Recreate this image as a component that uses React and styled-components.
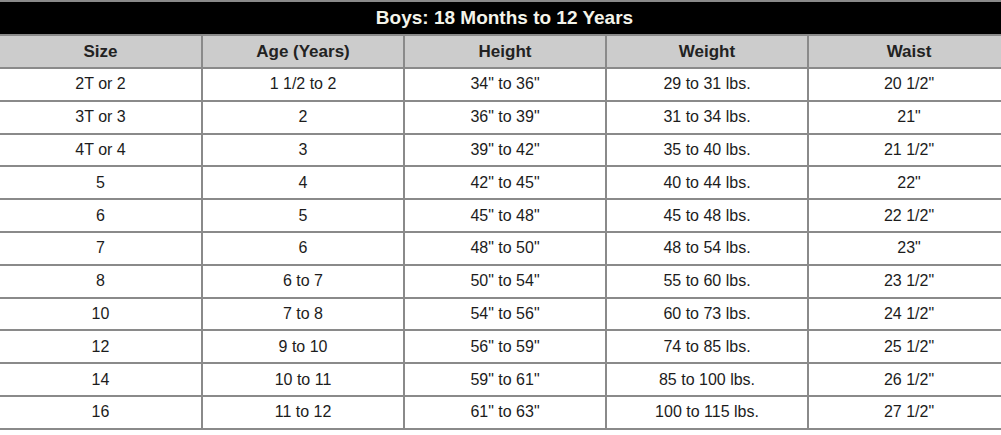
import React from 'react';
import styled, { createGlobalStyle } from 'styled-components';

const GlobalStyle = createGlobalStyle`
  html, body {
    margin: 0;
    padding: 0;
    background: #ffffff;
    overflow: hidden;
  }
  body {
    font-family: "Liberation Sans", Arial, sans-serif;
  }
`;

const Chart = styled.div`
  display: grid;
  grid-template-columns: 201px repeat(4, 200px);
  grid-template-rows: 32px 31px;
  grid-auto-rows: 30.8px;
  gap: 2px;
  padding: 2px 0;
  background: #8a8a8a;
  width: 1009px;
`;

const Title = styled.div`
  grid-column: 1 / -1;
  background: #000000;
  color: #f4f4ea;
  font-size: 19px;
  font-weight: bold;
  display: flex;
  align-items: center;
  justify-content: center;
`;

const HeadCell = styled.div`
  background: #cccccc;
  color: #222222;
  font-size: 17px;
  font-weight: bold;
  display: flex;
  align-items: center;
  justify-content: center;
`;

const Cell = styled.div`
  background: #ffffff;
  color: #1c1c1c;
  font-size: 16px;
  display: flex;
  align-items: center;
  justify-content: center;
`;

const columns = ['Size', 'Age (Years)', 'Height', 'Weight', 'Waist'];

const rows = [
  ['2T or 2', '1 1/2 to 2', '34" to 36"', '29 to 31 lbs.', '20 1/2"'],
  ['3T or 3', '2', '36" to 39"', '31 to 34 lbs.', '21"'],
  ['4T or 4', '3', '39" to 42"', '35 to 40 lbs.', '21 1/2"'],
  ['5', '4', '42" to 45"', '40 to 44 lbs.', '22"'],
  ['6', '5', '45" to 48"', '45 to 48 lbs.', '22 1/2"'],
  ['7', '6', '48" to 50"', '48 to 54 lbs.', '23"'],
  ['8', '6 to 7', '50" to 54"', '55 to 60 lbs.', '23 1/2"'],
  ['10', '7 to 8', '54" to 56"', '60 to 73 lbs.', '24 1/2"'],
  ['12', '9 to 10', '56" to 59"', '74 to 85 lbs.', '25 1/2"'],
  ['14', '10 to 11', '59" to 61"', '85 to 100 lbs.', '26 1/2"'],
  ['16', '11 to 12', '61" to 63"', '100 to 115 lbs.', '27 1/2"'],
];

const App = () => (
  <>
    <GlobalStyle />
    <Chart>
      <Title>Boys: 18 Months to 12 Years</Title>
      {columns.map((c) => (
        <HeadCell key={c}>{c}</HeadCell>
      ))}
      {rows.map((row, i) =>
        row.map((val, j) => <Cell key={`${i}-${j}`}>{val}</Cell>)
      )}
    </Chart>
  </>
);

export default App;
